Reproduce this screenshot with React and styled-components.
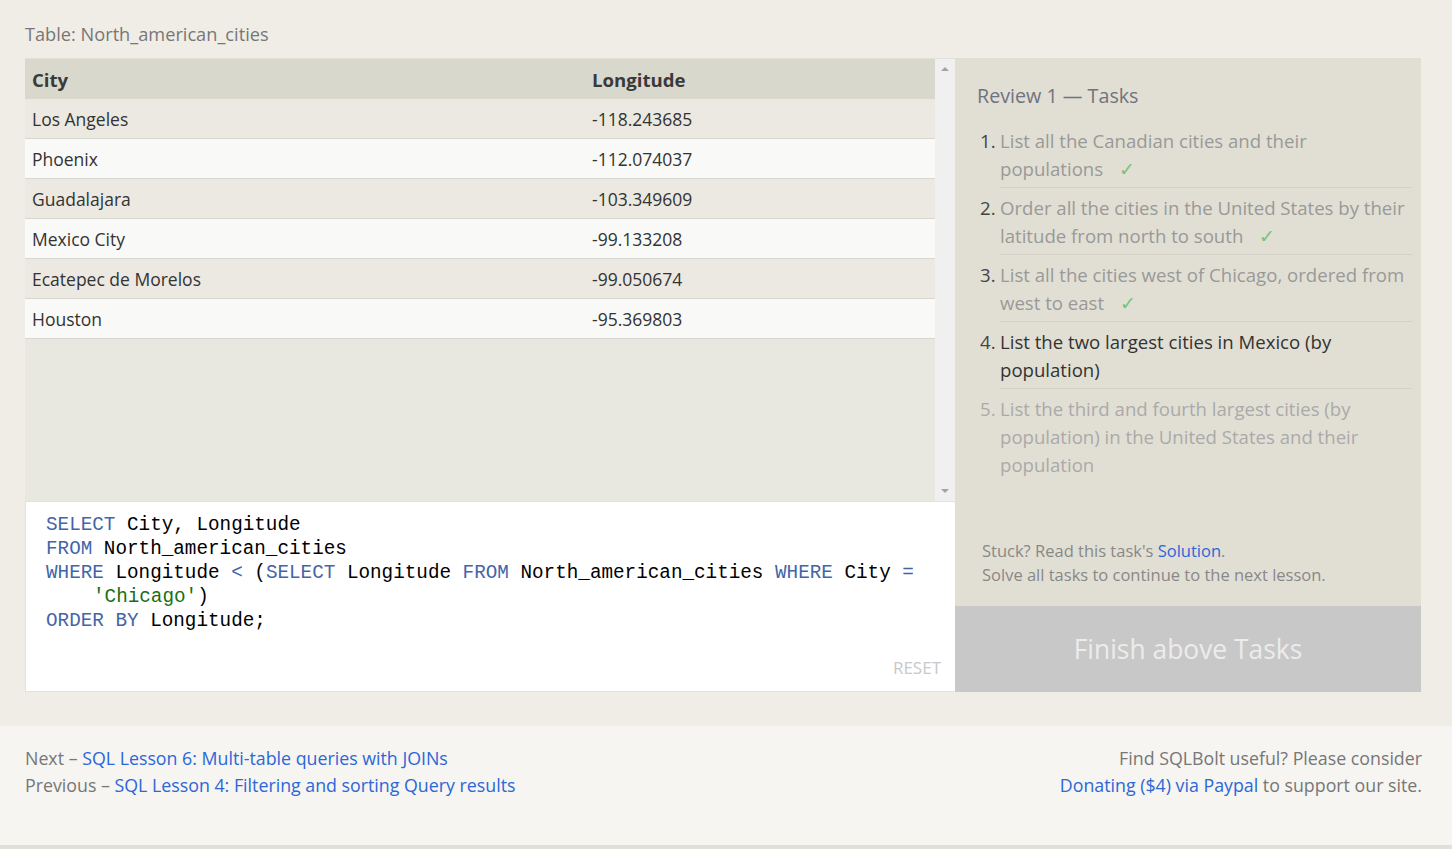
import React from "react";
import styled, { createGlobalStyle } from "styled-components";

const GlobalStyle = createGlobalStyle`
  html { background: #e2dfd8; }
  body {
    margin: 0;
    background: #efede6;
    font-family: "Open Sans", "Noto Sans", sans-serif;
    color: #333;
  }
`;

const Main = styled.section`
  padding: 20px 31px 34px 25px;
`;

const TableLabel = styled.div`
  font-size: 18.2px;
  color: #777;
  line-height: 28px;
  margin-bottom: 10px;
`;

const Exercise = styled.div`
  display: flex;
  height: 634px;
`;

const LeftColumn = styled.div`
  width: 930px;
  display: flex;
  flex-direction: column;
`;

const TableArea = styled.div`
  height: 443px;
  display: flex;
  background: #e9e8e0;
  border-top: 1px solid #e2e1d9;
  box-sizing: border-box;
`;

const TableScroll = styled.div`
  flex: 1;
  overflow: hidden;
`;

const Table = styled.table`
  width: 100%;
  border-collapse: collapse;
  font-size: 17.5px;
  line-height: 24px;
`;

const HeadCell = styled.th`
  text-align: left;
  font-weight: 700;
  font-size: 18.6px;
  color: #3a3a3a;
  background: #d9d8cc;
  height: 40px;
  padding: 2px 7px 0;
  box-sizing: border-box;
  width: ${p => p.$w || "auto"};
`;

const Row = styled.tr`
  background: ${p => (p.$odd ? "#ebe9e1" : "#f9f9f7")};
  border-bottom: 1px solid #d8d7cf;
`;

const Cell = styled.td`
  height: 38px;
  padding: 1px 7px 0;
  color: #333;
`;

const ScrollTrack = styled.div`
  width: 20px;
  background: #f0f0f0;
  display: flex;
  flex-direction: column;
  justify-content: space-between;
  align-items: center;
  padding: 8px 0;
  box-sizing: border-box;
`;

const Arrow = styled.div`
  width: 0;
  height: 0;
  border-left: 4px solid transparent;
  border-right: 4px solid transparent;
  ${p => (p.$down ? "border-top: 4px solid #a3a3a3;" : "border-bottom: 4px solid #a3a3a3;")}
`;

const Editor = styled.div`
  flex: 1;
  background: #fff;
  border: 1px solid #e4e2da;
  border-right: none;
  position: relative;
  padding: 11px 20px;
  font-family: "Liberation Mono", "DejaVu Sans Mono", monospace;
  font-size: 19.3px;
  line-height: 24px;
  color: #000;
`;

const CodeLine = styled.div`
  white-space: pre;
  padding-left: ${p => (p.$indent ? "47px" : "0")};
`;

const Kw = styled.span`
  color: #4365a8;
`;

const Str = styled.span`
  color: #177017;
`;

const Reset = styled.div`
  position: absolute;
  right: 14px;
  bottom: 11px;
  font-family: "Open Sans", "Noto Sans", sans-serif;
  font-size: 17px;
  color: #c9c9c9;
`;

const TaskPanel = styled.div`
  width: 466px;
  display: flex;
  flex-direction: column;
  background: #e1dfd4;
`;

const TaskBody = styled.div`
  flex: 1;
  padding: 24px 9px 0 22px;
  display: flex;
  flex-direction: column;
`;

const TaskTitle = styled.div`
  font-size: 19.7px;
  color: #6e7380;
  line-height: 28px;
  margin-bottom: 17px;
`;

const TaskList = styled.ol`
  margin: 0;
  padding: 0;
  list-style: none;
`;

const Task = styled.li`
  font-size: 18.6px;
  line-height: 28px;
  padding-bottom: 4px;
  margin-bottom: 6px;
  border-bottom: ${p => (p.$last ? "none" : "1px solid #d4d2c7")};
  position: relative;
  margin-left: 23px;
  color: ${p => (p.$state === "active" ? "#333" : p.$state === "done" ? "#999" : "#aaa")};
`;

const TaskNum = styled.span`
  position: absolute;
  left: -20px;
  color: ${p => (p.$state === "todo" ? "#aaa" : "#444")};
`;

const Check = styled.span`
  display: inline-block;
  height: 28px;
  vertical-align: top;
  color: #78c478;
  margin-left: 16px;
  line-height: 28px;
`;

const Hint = styled.div`
  margin-top: auto;
  padding: 0 0 19px 5px;
  font-size: 16.5px;
  line-height: 24px;
  color: #888;
`;

const Link = styled.a`
  color: #2b67d8;
  text-decoration: none;
`;

const FinishButton = styled.div`
  height: 86px;
  background: #c8c8c8;
  color: #ececec;
  font-size: 26.4px;
  display: flex;
  align-items: center;
  justify-content: center;
`;

const Footer = styled.footer`
  background: #f6f5f1;
  height: 119px;
  padding: 19px 30px 0 25px;
  box-sizing: border-box;
  display: flex;
  justify-content: space-between;
  font-size: 17.8px;
  line-height: 27px;
  color: #777;
`;

const FooterBlock = styled.div`
  text-align: ${p => p.$align || "left"};
`;

const rows = [
  ["Los Angeles", "-118.243685"],
  ["Phoenix", "-112.074037"],
  ["Guadalajara", "-103.349609"],
  ["Mexico City", "-99.133208"],
  ["Ecatepec de Morelos", "-99.050674"],
  ["Houston", "-95.369803"],
];

const tasks = [
  { text: "List all the Canadian cities and their populations", state: "done" },
  { text: "Order all the cities in the United States by their latitude from north to south", state: "done" },
  { text: "List all the cities west of Chicago, ordered from west to east", state: "done" },
  { text: "List the two largest cities in Mexico (by population)", state: "active" },
  { text: "List the third and fourth largest cities (by population) in the United States and their population", state: "todo" },
];

export default function App() {
  return (
    <>
      <GlobalStyle />
      <Main>
        <TableLabel>Table: North_american_cities</TableLabel>
        <Exercise>
          <LeftColumn>
            <TableArea>
              <TableScroll>
                <Table>
                  <thead>
                    <tr>
                      <HeadCell $w="560px">City</HeadCell>
                      <HeadCell>Longitude</HeadCell>
                    </tr>
                  </thead>
                  <tbody>
                    {rows.map((r, i) => (
                      <Row key={r[0]} $odd={i % 2 === 0}>
                        <Cell>{r[0]}</Cell>
                        <Cell>{r[1]}</Cell>
                      </Row>
                    ))}
                  </tbody>
                </Table>
              </TableScroll>
              <ScrollTrack>
                <Arrow />
                <Arrow $down />
              </ScrollTrack>
            </TableArea>
            <Editor>
              <CodeLine><Kw>SELECT</Kw> City, Longitude</CodeLine>
              <CodeLine><Kw>FROM</Kw> North_american_cities</CodeLine>
              <CodeLine>
                <Kw>WHERE</Kw> Longitude <Kw>&lt;</Kw> (<Kw>SELECT</Kw> Longitude <Kw>FROM</Kw> North_american_cities <Kw>WHERE</Kw> City <Kw>=</Kw>
              </CodeLine>
              <CodeLine $indent><Str>'Chicago'</Str>)</CodeLine>
              <CodeLine><Kw>ORDER BY</Kw> Longitude;</CodeLine>
              <Reset>RESET</Reset>
            </Editor>
          </LeftColumn>
          <TaskPanel>
            <TaskBody>
              <TaskTitle>Review 1 — Tasks</TaskTitle>
              <TaskList>
                {tasks.map((t, i) => (
                  <Task key={i} $state={t.state} $last={i === tasks.length - 1}>
                    <TaskNum $state={t.state}>{i + 1}.</TaskNum>
                    {t.text}
                    {t.state === "done" && <Check>✓</Check>}
                  </Task>
                ))}
              </TaskList>
              <Hint>
                Stuck? Read this task's <Link href="#">Solution</Link>.
                <br />
                Solve all tasks to continue to the next lesson.
              </Hint>
            </TaskBody>
            <FinishButton>Finish above Tasks</FinishButton>
          </TaskPanel>
        </Exercise>
      </Main>
      <Footer>
        <FooterBlock>
          Next – <Link href="#">SQL Lesson 6: Multi-table queries with JOINs</Link>
          <br />
          Previous – <Link href="#">SQL Lesson 4: Filtering and sorting Query results</Link>
        </FooterBlock>
        <FooterBlock $align="right">
          Find SQLBolt useful? Please consider
          <br />
          <Link href="#">Donating ($4) via Paypal</Link> to support our site.
        </FooterBlock>
      </Footer>
    </>
  );
}
